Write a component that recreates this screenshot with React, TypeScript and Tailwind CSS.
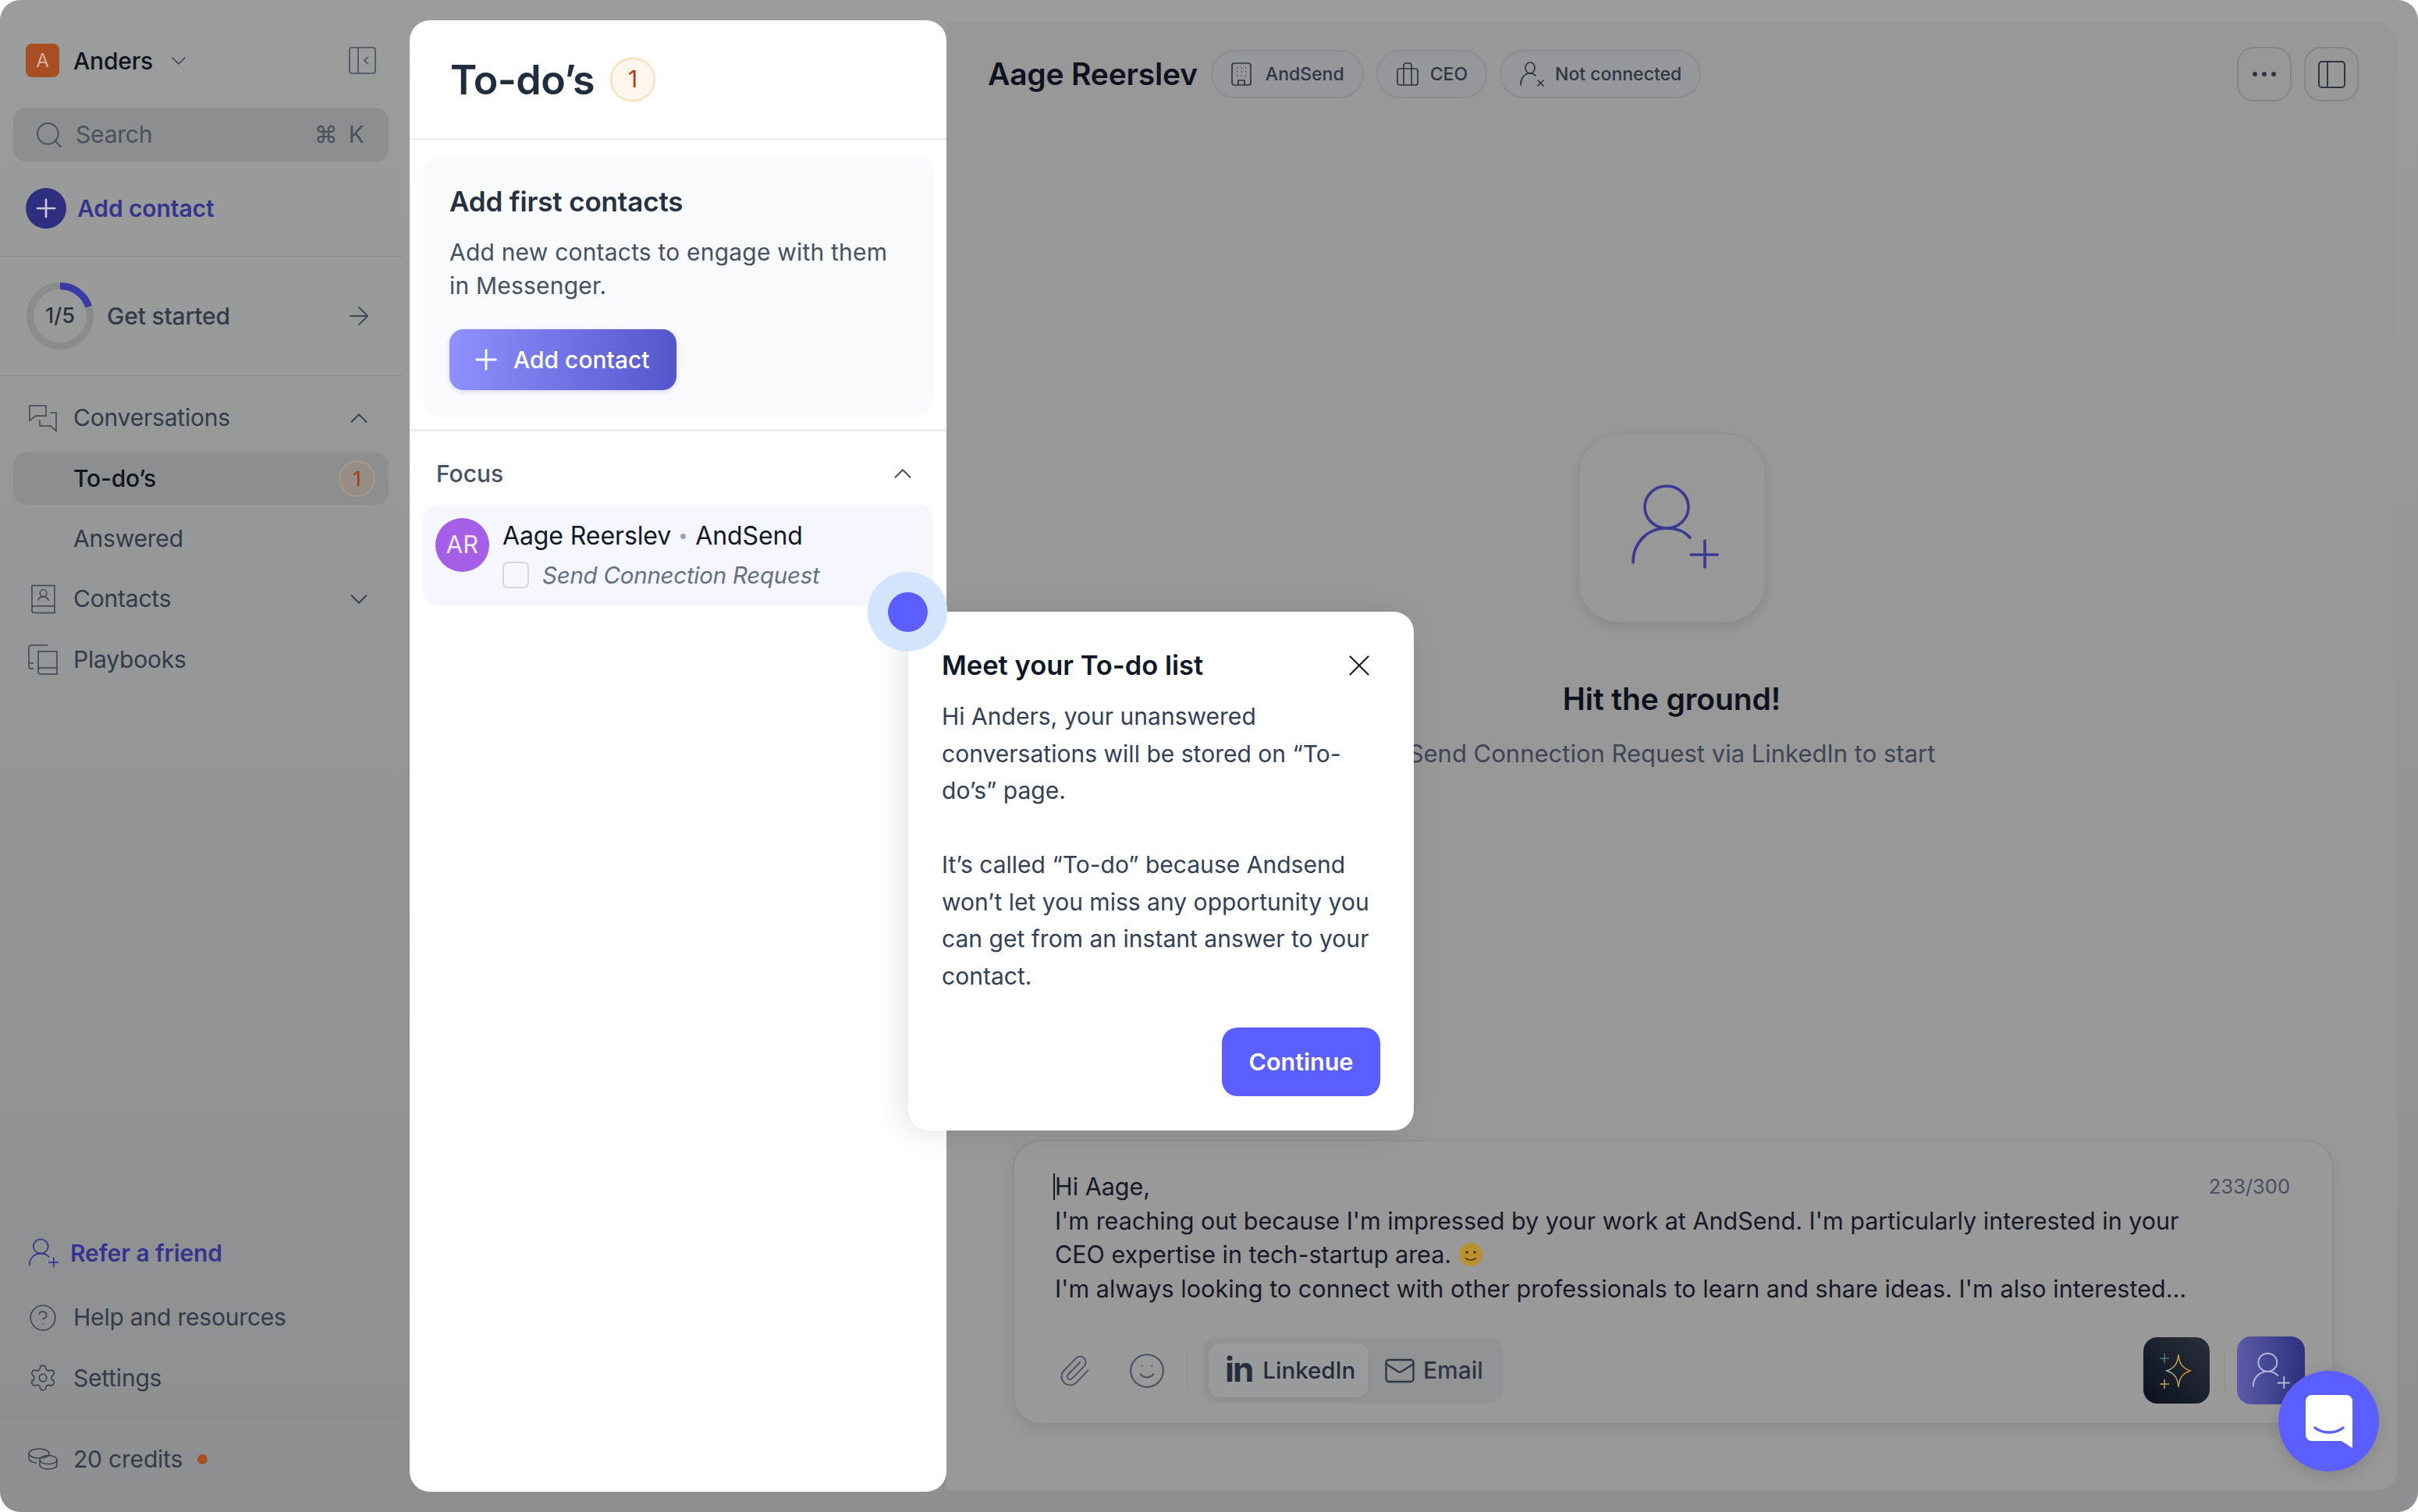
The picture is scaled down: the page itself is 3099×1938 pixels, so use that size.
import React from 'react';
import { ArrowRight, ChevronDown, ChevronUp, CircleHelp, Mail, Paperclip, Plus, Search, Settings, Smile, X } from 'lucide-react';

function PersonPlus({ className, width = 4.5 }: { className?: string; width?: number }) {
  return (
    <svg viewBox="0 0 112 108" fill="none" stroke="currentColor" strokeWidth={width} strokeLinecap="round" className={className}>
      <ellipse cx="45" cy="29" rx="28" ry="27" />
      <path d="M2 100C2 75 20 56 45 56c13 0 23 4 30 12" />
      <path d="M94 72v34M76 90h34" />
    </svg>
  );
}

function NavRow({ icon, label, chevron }: { icon?: React.ReactNode; label: string; chevron?: 'up' | 'down' }) {
  return (
    <div className="h-[77.5px] flex items-center pl-[36px] pr-[46px]">
      <div className="w-[38px] h-[38px] mr-[20px] flex items-center justify-center text-[#3d4451] shrink-0">{icon}</div>
      <span className="text-[30px] tracking-[-0.2px] text-[#333b49]">{label}</span>
      {chevron === 'up' && <ChevronUp className="ml-auto w-[38px] h-[38px] text-[#3d4451]" strokeWidth={1.3} />}
      {chevron === 'down' && <ChevronDown className="ml-auto w-[38px] h-[38px] text-[#3d4451]" strokeWidth={1.3} />}
    </div>
  );
}

function Sidebar() {
  return (
    <aside className="w-[525px] shrink-0 flex flex-col">
      <div className="mt-[56px] ml-[33px] mr-[43px] h-[43px] flex items-center">
        <div className="w-[43px] h-[43px] rounded-[8px] bg-[#a84e23] text-[#d9b09c] text-[24px] flex items-center justify-center">A</div>
        <span className="ml-[18px] mt-[2px] text-[30px] tracking-[-0.2px] font-medium text-[#101520]">Anders</span>
        <ChevronDown className="ml-[17px] w-[32px] h-[32px] text-[#3d4451]" strokeWidth={1.2} />
        <svg viewBox="0 0 35 35" fill="none" stroke="currentColor" strokeWidth="1.6" className="ml-auto w-[35px] h-[35px] text-[#474e5c]">
          <rect x="1" y="1" width="33" height="33" rx="3" />
          <path d="M12 1v33M25 13l-5 4.500 5 4.500" />
        </svg>
      </div>

      <div className="mt-[39px] ml-[17px] mr-[27px] h-[69px] rounded-[16px] bg-[#8d8e8f] flex items-center pl-[26px] pr-[31px] text-[#4b515d]">
        <Search className="w-[40px] h-[40px]" strokeWidth={1.2} />
        <span className="ml-[14px] text-[30px] tracking-[-0.2px]">Search</span>
        <span className="ml-auto text-[30px]">⌘</span>
        <span className="ml-[14px] text-[30px]">K</span>
      </div>

      <div className="mt-[34px] ml-[33px] h-[52px] flex items-center">
        <div className="w-[52px] h-[52px] rounded-full bg-[#2f2f82] text-[#c9c9d8] flex items-center justify-center">
          <Plus className="w-[38px] h-[38px]" strokeWidth={1.7} />
        </div>
        <span className="ml-[14px] text-[30px] tracking-[-0.1px] font-semibold text-[#35358f]">Add contact</span>
      </div>

      <div className="mt-[35px] h-[1px] bg-[#8c8d8e] mr-[9px]" />

      <div className="mt-[33px] ml-[34px] mr-[46px] h-[86px] flex items-center">
        <div className="relative w-[86px] h-[86px] flex items-center justify-center">
          <svg viewBox="0 0 86 86" fill="none" strokeWidth="9" className="absolute inset-0 w-[86px] h-[86px]">
            <circle cx="43" cy="43" r="38.500" stroke="#8a8c8c" />
            <path d="M43 4.500A38.500 38.500 0 0 1 79.600 31" stroke="#3b3ba6" />
          </svg>
          <span className="text-[27px] font-medium text-[#2b313c]">1/5</span>
        </div>
        <span className="ml-[17px] text-[30px] tracking-[-0.2px] font-medium text-[#333b49]">Get started</span>
        <ArrowRight className="ml-auto w-[38px] h-[38px] text-[#3d4451]" strokeWidth={1.2} />
      </div>

      <div className="mt-[33px] h-[1px] bg-[#8c8d8e] mr-[9px]" />

      <div className="mt-[15px] flex flex-col">
        <NavRow
          label="Conversations"
          chevron="up"
          icon={
            <svg viewBox="0 0 36 36" fill="none" stroke="currentColor" strokeWidth="1.5" className="w-[36px] h-[36px]">
              <path d="M1 2h21v13H9l-8 6z" />
              <path d="M27 11h8v23l-7-6H14v-8" />
            </svg>
          }
        />
        <div className="ml-[17px] mr-[27px] h-[67px] my-[5px] rounded-[16px] bg-[#8d8e8f] flex items-center pl-[77px] pr-[17px]">
          <span className="text-[30px] tracking-[-0.2px] font-medium text-[#0f1420]">To-do’s</span>
          <div className="ml-auto w-[47px] h-[47px] rounded-full bg-[#968e86] border-2 border-[#a89a84] text-[#a23d17] text-[26px] flex items-center justify-center">1</div>
        </div>
        <NavRow label="Answered" />
        <NavRow
          label="Contacts"
          chevron="down"
          icon={
            <svg viewBox="0 0 32 38" fill="none" stroke="currentColor" strokeWidth="1.5" className="w-[31px] h-[38px]">
              <path d="M1 1h30v36H4a3 3 0 0 1-3-3zM1 31a3 3 0 0 1 3-3h27" />
              <circle cx="16" cy="11" r="4.500" />
              <path d="M9 21c1-4 3-5 7-5s6 1 7 5" />
            </svg>
          }
        />
        <NavRow
          label="Playbooks"
          icon={
            <svg viewBox="0 0 38 39" fill="none" stroke="currentColor" strokeWidth="1.5" className="w-[38px] h-[39px]">
              <path d="M25 1H4a3 3 0 0 0-3 3v24a3 3 0 0 0 3 3h3" />
              <path d="M13 9h24v29H16a3 3 0 0 1-3-3zM13 33a3 3 0 0 1 3-3h21" />
              <path d="M1 24h6" />
            </svg>
          }
        />
      </div>

      <div className="mt-auto flex flex-col">
        <div className="h-[78px] mb-[5px] flex items-center pl-[37px]">
          <PersonPlus className="w-[38px] h-[38px] text-[#35358f]" width={5} />
          <span className="ml-[15px] text-[30px] tracking-[-0.1px] font-semibold text-[#35358f]">Refer a friend</span>
        </div>
        <NavRow label="Help and resources" icon={<CircleHelp className="w-[44px] h-[44px]" strokeWidth={1} />} />
        <NavRow label="Settings" icon={<Settings className="w-[42px] h-[42px]" strokeWidth={1.05} />} />
        <div className="mt-[11px] h-[1px] bg-[#8a8b8c] mr-[9px]" />
        <div className="h-[106px] mb-[15px] flex items-center pl-[36px]">
          <svg viewBox="0 0 38 28" fill="none" stroke="currentColor" strokeWidth="1.5" className="w-[38px] h-[28px] text-[#3d4451] mr-[20px]">
            <ellipse cx="14" cy="7" rx="13" ry="6" />
            <path d="M1 7v6c0 3 4 6 10 6" />
            <ellipse cx="26" cy="15" rx="11" ry="5.500" />
            <path d="M15 15v7c0 3 5 5 11 5s11-2 11-5v-7" />
          </svg>
          <span className="text-[30px] tracking-[-0.2px] text-[#333b49]">20 credits</span>
          <div className="ml-[19px] w-[13px] h-[13px] rounded-full bg-[#a84e23]" />
        </div>
      </div>
    </aside>
  );
}

function TodoPanel() {
  return (
    <section className="w-[688px] shrink-0 my-[26px] bg-white rounded-[26px] flex flex-col">
      <div className="h-[154px] pl-[52px] flex items-center border-b-[3px] border-[#eef0f3]">
        <h1 className="mt-[2px] text-[52px] font-semibold text-[#202d3c] tracking-[-0.6px]">To-do’s</h1>
        <div className="ml-[20px] w-[58px] h-[56px] rounded-full bg-[#fff6ed] border-2 border-[#fbdcae] text-[#b93815] text-[30px] flex items-center justify-center">1</div>
      </div>

      <div className="mt-[18px] mx-[17px] h-[337px] rounded-[24px] bg-[#f8fafc] pl-[34px] pt-[40px]">
        <h2 className="text-[35px] tracking-[-0.15px] leading-[40px] font-semibold text-[#27313f]">Add first contacts</h2>
        <p className="mt-[24px] text-[30px] leading-[43px] tracking-[0.2px] text-[#465162]">
          Add new contacts to engage with them
          <br />
          in Messenger.
        </p>
        <button className="mt-[34px] w-[291px] h-[78px] rounded-[18px] bg-gradient-to-r from-[#9091ff] to-[#5556cb] text-white flex items-center pl-[26px] shadow-[0_2px_6px_rgba(80,80,200,0.2)]">
          <Plus className="w-[42px] h-[42px]" strokeWidth={1.6} />
          <span className="ml-[14px] text-[30px] font-medium">Add contact</span>
        </button>
      </div>

      <div className="mt-[15px] h-[3px] bg-[#eef0f3]" />

      <div className="mt-[29px] mx-[34px] h-[50px] flex items-center justify-between pr-[3px]">
        <span className="text-[30px] font-medium text-[#475263]">Focus</span>
        <ChevronUp className="w-[38px] h-[38px] text-[#475263]" strokeWidth={1.3} />
      </div>

      <div className="mt-[15px] mx-[17px] h-[129px] rounded-[20px] bg-[#f5f6ff] pl-[16px] pt-[17px] flex">
        <div className="w-[69px] h-[69px] rounded-full bg-[#a55fe6] text-[#f3e8fd] text-[31px] flex items-center justify-center">AR</div>
        <div className="ml-[17px] flex flex-col">
          <div className="flex items-center h-[46px] text-[32px] tracking-[-0.1px] text-[#111827]">
            <span>Aage Reerslev</span>
            <span className="mx-[12px] w-[7px] h-[7px] rounded-full bg-[#98a2b3]" />
            <span>AndSend</span>
          </div>
          <div className="flex items-center mt-[5px]">
            <div className="w-[34px] h-[34px] rounded-[7px] border-2 border-[#d5d7e0]" />
            <span className="ml-[17px] text-[29.500px] tracking-[-0.25px] italic text-[#667085]">Send Connection Request</span>
          </div>
        </div>
      </div>
    </section>
  );
}

function Chip({ icon, label, gap }: { icon: React.ReactNode; label: string; gap: string }) {
  return (
    <div className="h-[62px] rounded-full border-2 border-[#8c8d8f] bg-[#96979a] flex items-center pl-[24px] pr-[23px] text-[#2f3542]">
      {icon}
      <span className={`${gap} text-[23px] font-medium`}>{label}</span>
    </div>
  );
}

function MainPanel() {
  return (
    <main className="flex-1 my-[28px] mr-[27px] bg-[#989898] rounded-r-[26px] flex flex-col">
      <header className="h-[134px] shrink-0 flex items-center pl-[53px] pr-[49px]">
        <h2 className="text-[39px] tracking-[-0.2px] font-semibold text-[#10131f]">Aage Reerslev</h2>
        <div className="ml-[17px] flex items-center gap-[16px]">
          <Chip
            label="AndSend"
            gap="ml-[18px]"
            icon={
              <svg viewBox="0 0 26 30" fill="none" stroke="currentColor" strokeWidth="1.7" className="w-[26px] h-[32px]">
                <rect x="1" y="1" width="24" height="28" rx="3" />
                <path d="M7 7h1M12.500 7h1M18 7h1M7 12h1M12.500 12h1M18 12h1M7 17h1M12.500 17h1M18 17h1M9 29v-6h8v6" />
              </svg>
            }
          />
          <Chip
            label="CEO"
            gap="ml-[15px]"
            icon={
              <svg viewBox="0 0 28 30" fill="none" stroke="currentColor" strokeWidth="1.7" className="w-[28px] h-[30px]">
                <rect x="1" y="8" width="26" height="21" rx="3" />
                <path d="M9 8V4a3 3 0 0 1 3-3h4a3 3 0 0 1 3 3v4M9 8v21M19 8v21" />
              </svg>
            }
          />
          <Chip
            label="Not connected"
            gap="ml-[13px]"
            icon={
              <svg viewBox="0 0 32 32" fill="none" stroke="currentColor" strokeWidth="1.7" strokeLinecap="round" className="w-[32px] h-[32px]">
                <ellipse cx="13" cy="8" rx="6" ry="7" />
                <path d="M1 30c0-9 5-15 12-15 3 0 5 1 7 3M23 24l7 7M30 24l-7 7" />
              </svg>
            }
          />
        </div>
        <div className="ml-auto flex gap-[16px]">
          <button className="w-[70px] h-[70px] rounded-[22px] border-2 border-[#858688] flex items-center justify-center gap-[6px]">
            <span className="w-[6px] h-[6px] rounded-full bg-[#2f3542]" />
            <span className="w-[6px] h-[6px] rounded-full bg-[#2f3542]" />
            <span className="w-[6px] h-[6px] rounded-full bg-[#2f3542]" />
          </button>
          <button className="w-[70px] h-[70px] rounded-[22px] border-2 border-[#858688] flex items-center justify-center">
            <svg viewBox="0 0 35 35" fill="none" stroke="#2f3542" strokeWidth="2" className="w-[35px] h-[35px]">
              <rect x="1" y="1" width="33" height="33" rx="4" />
              <path d="M12 1v33" />
            </svg>
          </button>
        </div>
      </header>

      <div className="mt-[393px] flex flex-col items-center">
        <div className="w-[240px] h-[243px] rounded-[52px] bg-[#989898] border border-[#8f8f8f] shadow-[0_6px_14px_rgba(0,0,0,0.1)] flex items-center justify-center">
          <PersonPlus className="w-[112px] h-[108px] ml-[9px] -mt-[4px] text-[#3a3b90]" width={3.6} />
        </div>
        <h3 className="mt-[74px] text-[39px] tracking-[-0.1px] leading-[48px] font-semibold text-[#0f121d]">Hit the ground!</h3>
        <p className="mt-[24px] text-[31px] leading-[44px] text-[#3e4554] whitespace-nowrap">Send Connection Request via LinkedIn to start</p>
      </div>

      <div className="mt-auto mb-[84px] ml-[85px] mr-[81px] h-[365px] rounded-[36px] border-2 border-[#8e8e90] bg-[#99999a] shadow-[0_8px_18px_rgba(0,0,0,0.07)] flex flex-col pl-[52px] pr-[35px]">
        <div className="mt-[36px] h-[174px] relative text-[30.500px] leading-[43.500px] text-[#171a26] whitespace-nowrap">
          <span className="absolute left-[-2px] top-[5px] w-[2px] h-[34px] bg-[#171a26]" />
          <span className="absolute right-[19px] top-[0px] text-[25.500px] text-[#4a4f5c]">233/300</span>
          <div className="h-[43.500px]">Hi Aage,</div>
          <div className="h-[43.500px]">I'm reaching out because I'm impressed by your work at AndSend. I'm particularly interested in your</div>
          <div className="h-[43.500px] flex items-center">
            CEO expertise in tech-startup area.
            <svg viewBox="0 0 30 30" className="ml-[10px] w-[30px] h-[30px]">
              <circle cx="15" cy="15" r="15" fill="#b8922f" />
              <circle cx="10" cy="12" r="1.800" fill="#4a3410" />
              <circle cx="20" cy="12" r="1.800" fill="#4a3410" />
              <path d="M8 19c3 4 11 4 14 0" fill="none" stroke="#4a3410" strokeWidth="1.500" />
            </svg>
          </div>
          <div className="h-[43.500px] tracking-[0.06px]">I'm always looking to connect with other professionals to learn and share ideas. I'm also interested…</div>
        </div>

        <div className="mt-[40px] flex items-center">
          <Paperclip className="ml-[3px] w-[44px] h-[44px] text-[#4b5260]" strokeWidth={1} />
          <Smile className="ml-[46px] w-[50px] h-[50px] text-[#4b5260]" strokeWidth={1} />
          <div className="ml-[26px] w-[1px] h-[46px] bg-[#8a8b8c]" />
          <div className="ml-[20px] h-[85px] w-[384px] rounded-[16px] bg-[#929395] flex items-center px-[7px]">
            <div className="w-[205px] h-[69px] rounded-[14px] bg-[#999a9c] shadow-[0_2px_5px_rgba(0,0,0,0.06)] flex items-center pl-[21px] text-[#252c3a]">
              <span className="text-[44px] leading-none font-bold tracking-[-2px] -mt-[4px]">in</span>
              <span className="ml-[13px] text-[29.500px] font-medium">LinkedIn</span>
            </div>
            <Mail className="ml-[19px] w-[42px] h-[42px] text-[#2f3542]" strokeWidth={1.3} />
            <span className="ml-[9px] text-[30px] font-medium text-[#2f3542]">Email</span>
          </div>
          <div className="ml-auto w-[85px] h-[85px] rounded-[18px] bg-gradient-to-tr from-[#0d111f] to-[#2a313b] flex items-center justify-center">
            <svg viewBox="0 0 44 50" fill="none" strokeWidth="1.600" className="w-[44px] h-[50px]">
              <defs>
                <linearGradient id="spark" x1="0" y1="0" x2="1" y2="0">
                  <stop offset="0" stopColor="#8fb09a" />
                  <stop offset="1" stopColor="#d9841f" />
                </linearGradient>
              </defs>
              <path d="M24 4c1 11 4 17 15 21-11 4-14 10-15 21-1-11-4-17-15-21 11-4 14-10 15-21z" stroke="url(#spark)" />
              <path d="M6 3v12M0 9h12" stroke="#4f7a7d" />
              <path d="M6 36v12M0 42h12" stroke="#b9a055" />
            </svg>
          </div>
          <div className="ml-[19px] w-[1px] h-[46px] bg-[#8a8b8c]" />
          <div className="ml-[15px] w-[87px] h-[87px] rounded-[18px] bg-gradient-to-r from-[#5c5ba6] to-[#2f3080] flex items-center justify-center">
            <PersonPlus className="w-[48px] h-[48px] text-[#b7b8d8]" width={4.5} />
          </div>
        </div>
      </div>
    </main>
  );
}

function Coachmark() {
  return (
    <>
      <div className="absolute left-[1164px] top-[784px] w-[648px] h-[665px] bg-white rounded-[26px] shadow-[-8px_4px_40px_rgba(0,0,0,0.1)] pl-[43px] pr-[43px] pt-[47px]">
        <div className="flex items-center justify-between h-[44px] pr-[11px]">
          <h3 className="text-[34.500px] font-semibold text-[#101828]">Meet your To-do list</h3>
          <X className="w-[46px] h-[46px] text-[#1d2533] -mr-[7px]" strokeWidth={1.200} />
        </div>
        <p className="mt-[20px] text-[30px] leading-[47.500px] tracking-[0.02px] text-[#344054] whitespace-nowrap">
          Hi Anders, your unanswered
          <br />
          conversations will be stored on “To-
          <br />
          do’s” page.
          <br />
          <br />
          It’s called “To-do” because Andsend
          <br />
          won’t let you miss any opportunity you
          <br />
          can get from an instant answer to your
          <br />
          contact.
        </p>
        <div className="mt-[42px] flex justify-end">
          <button className="w-[203px] h-[88px] rounded-[20px] bg-[#5c5fff] text-white text-[30.500px] font-semibold">Continue</button>
        </div>
      </div>

      <div className="absolute left-[1112px] top-[733px] w-[102px] h-[102px] rounded-full bg-[#d3e5fd] flex items-center justify-center">
        <div className="w-[51px] h-[51px] rounded-full bg-[#5c5fff]" />
      </div>

      <div className="absolute left-[2920px] top-[1757px] w-[129px] h-[129px] rounded-full bg-[#5c5fff] shadow-[0_4px_20px_rgba(0,0,0,0.12)] flex items-center justify-center">
        <svg viewBox="0 0 60 68" className="w-[60px] h-[68px]">
          <path d="M8 0h44a8 8 0 0 1 8 8v60l-14-9H8a8 8 0 0 1-8-8V8a8 8 0 0 1 8-8z" fill="#fff" />
          <path d="M12 42c10 8 26 8 36 0" fill="none" stroke="#5c5fff" strokeWidth="3.500" strokeLinecap="round" />
        </svg>
      </div>
    </>
  );
}

export default function App() {
  return (
    <div className="relative w-[3099px] h-[1938px] bg-white overflow-hidden font-[Inter,sans-serif]">
      <div className="h-full rounded-[26px] bg-gradient-to-b from-[#9b9c9c] to-[#8e8f90] flex">
        <Sidebar />
        <TodoPanel />
        <MainPanel />
      </div>
      <Coachmark />
    </div>
  );
}
